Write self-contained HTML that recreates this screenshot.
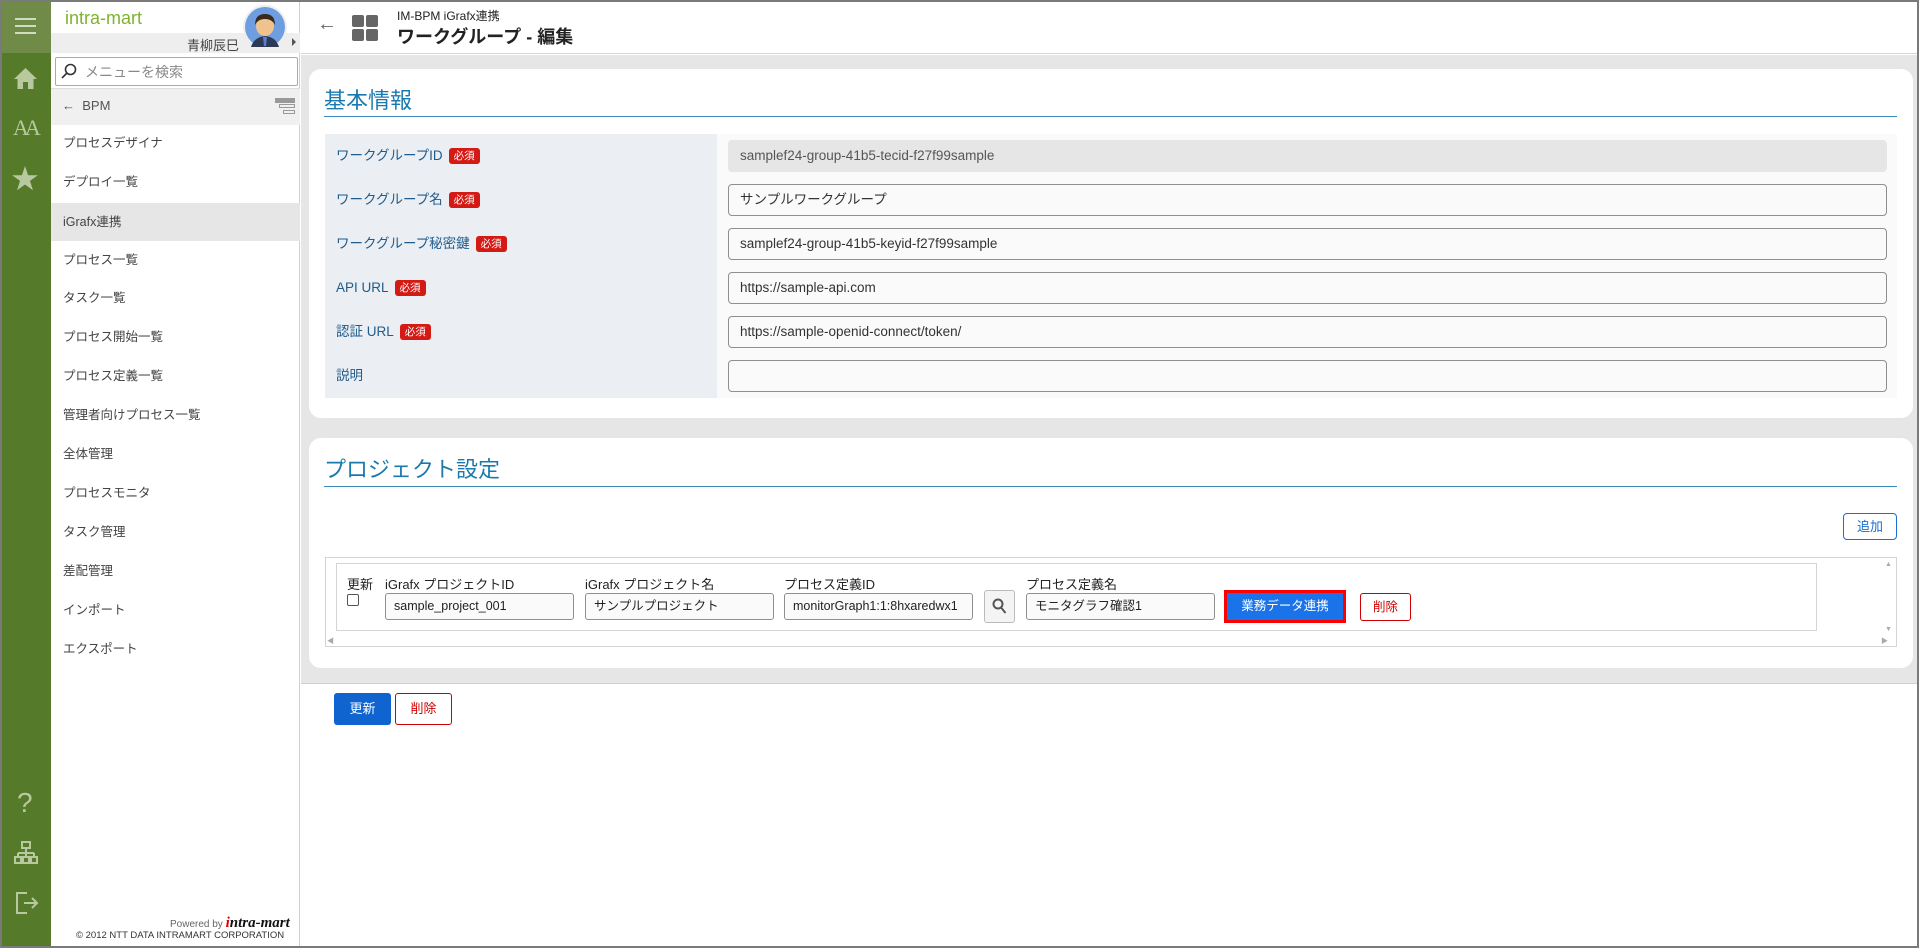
<!DOCTYPE html>
<html><head><meta charset="utf-8">
<style>
*{box-sizing:border-box;margin:0;padding:0}
body{width:1919px;height:948px;position:relative;overflow:hidden;background:#fff;font-family:"Liberation Sans","Noto Sans CJK JP",sans-serif;font-size:13px;color:#333}
.a{position:absolute}
.frame{position:absolute;left:0;top:0;width:1919px;height:948px;border:2px solid #7a7a7a;border-left-width:2px;pointer-events:none;z-index:50}
.lbar{left:0;top:0;width:51px;height:948px;background:#557a2a}
.ico{color:#b8c9a0;fill:#b8c9a0}
.menu{left:51px;top:0;width:249px;height:948px;background:#fff;border-right:1px solid #d0d0d0}
.mi{position:absolute;left:51px;width:249px;height:39px;line-height:39px;padding-left:12px;font-size:12.5px;color:#444}
.lbl{position:absolute;left:336px;font-size:13.5px;color:#1f5c8c;line-height:20px}
.req{display:inline-block;background:#d41a14;color:#fff;font-size:10.5px;line-height:16px;padding:0 5px;border-radius:3px;margin-left:6px;vertical-align:1px}
.inp{position:absolute;left:728px;width:1159px;height:32px;border:1px solid #8f8f8f;border-radius:4px;background:#fafafa;padding-left:11px;line-height:30px;font-size:13.5px;color:#333}
.sm{position:absolute;height:27px;border:1px solid #8f8f8f;border-radius:3px;background:#fafafa;padding-left:8px;line-height:25px;font-size:12.5px;color:#222;overflow:hidden;white-space:nowrap}
.sl{position:absolute;top:574px;font-size:13px;color:#222}
</style></head><body>
<div class="frame"></div>
<!-- left bar -->
<div class="a lbar"></div>
<div class="a" style="left:0;top:0;width:51px;height:53px;background:#6f8b47"></div>
<div class="a" style="left:15px;top:18px;width:21px;height:2px;background:#cfdcbf;box-shadow:0 7px 0 #cfdcbf,0 14px 0 #cfdcbf"></div>
<svg class="a ico" style="left:13px;top:67px" width="25" height="23" viewBox="0 0 25 23"><path d="M12.5 1 L24 12 H20.5 V22 H15 V15 H10 V22 H4.5 V12 H1 Z"/></svg>
<div class="a ico" style="left:13px;top:115px;font-family:'Liberation Serif',serif;font-size:22px;letter-spacing:-4px">AA</div>
<svg class="a ico" style="left:12px;top:166px" width="26" height="25" viewBox="0 0 26 25"><path d="M13 0 L16.1 9.2 H25.8 L18 14.9 L20.9 24.2 L13 18.5 L5.1 24.2 L8 14.9 L0.2 9.2 H9.9 Z"/></svg>
<div class="a ico" style="left:17px;top:787px;font-size:28px;color:#b8c9a0">?</div>
<svg class="a" style="left:14px;top:841px" width="24" height="24" viewBox="0 0 24 24" fill="none" stroke="#b8c9a0" stroke-width="2"><rect x="8" y="1" width="8" height="6"/><path d="M12 7v5M4 12h16M4 12v4M12 12v4M20 12v4"/><rect x="1" y="16" width="6" height="6"/><rect x="9" y="16" width="6" height="6"/><rect x="17" y="16" width="6" height="6"/></svg>
<svg class="a" style="left:15px;top:891px" width="24" height="24" viewBox="0 0 24 24" fill="none" stroke="#b8c9a0" stroke-width="2"><path d="M12 2H2v20h10M9 12h13M17 7l5 5-5 5"/></svg>
<!-- menu -->
<div class="a menu"></div>
<div class="a" style="left:65px;top:8px;font-size:18px;color:#7db52c">intra-mart</div>
<div class="a" style="left:51px;top:33px;width:249px;height:20px;background:#eeeeee"></div>
<div class="a" style="left:187px;top:35px;font-size:13px;color:#444">青柳辰巳</div>
<div class="a" style="left:292px;top:38px;width:0;height:0;border-left:4px solid #555;border-top:4px solid transparent;border-bottom:4px solid transparent"></div>
<svg class="a" style="left:242px;top:4px" width="46" height="46" viewBox="0 0 46 46"><circle cx="23" cy="23" r="22" fill="#eee"/><circle cx="23" cy="23" r="20" fill="#6e9ee0"/><path d="M9 43 Q12 33 23 32 Q34 33 37 43 Z" fill="#2c3a55"/><path d="M21 33h4l-1 9h-2z" fill="#5a7fd0"/><ellipse cx="23" cy="22" rx="9" ry="10" fill="#f0c38e"/><path d="M13 21 Q13 10 23 10 Q33 10 33 21 Q30 15 23 15 Q16 15 13 21 Z" fill="#3a2a1e"/></svg>
<div class="a" style="left:55px;top:57px;width:243px;height:29px;border:1px solid #aaa;border-radius:2px"></div>
<svg class="a" style="left:61px;top:63px" width="16" height="16" viewBox="0 0 16 16" fill="none" stroke="#333" stroke-width="1.6"><circle cx="9.5" cy="6.5" r="5"/><path d="M6 10L1 15"/></svg>
<div class="a" style="left:85px;top:62px;font-size:14px;color:#888">メニューを検索</div>
<div class="a" style="left:51px;top:88px;width:249px;height:37px;background:#f0f0f0;border-top:1px solid #ddd"></div>
<div class="a" style="left:62px;top:98px;font-size:13px;color:#555">←&nbsp;&nbsp;BPM</div>
<div class="a" style="left:275px;top:98px;width:20px;height:5px;background:#999"></div>
<div class="a" style="left:279px;top:104px;width:16px;height:4px;border:1px solid #999"></div>
<div class="a" style="left:283px;top:110px;width:12px;height:4px;border:1px solid #999"></div>
<div class="mi" style="top:124px">プロセスデザイナ</div>
<div class="mi" style="top:163px">デプロイ一覧</div>
<div class="mi" style="top:203px;height:38px;line-height:38px;background:#e6e6e6">iGrafx連携</div>
<div class="mi" style="top:241px">プロセス一覧</div>
<div class="mi" style="top:279px">タスク一覧</div>
<div class="mi" style="top:318px">プロセス開始一覧</div>
<div class="mi" style="top:357px">プロセス定義一覧</div>
<div class="mi" style="top:396px">管理者向けプロセス一覧</div>
<div class="mi" style="top:435px">全体管理</div>
<div class="mi" style="top:474px">プロセスモニタ</div>
<div class="mi" style="top:513px">タスク管理</div>
<div class="mi" style="top:552px">差配管理</div>
<div class="mi" style="top:591px">インポート</div>
<div class="mi" style="top:630px">エクスポート</div>
<div class="a" style="left:170px;top:915px;font-size:10px;color:#666">Powered by <span style="font-family:'Liberation Serif',serif;font-weight:bold;font-size:15px;color:#111;font-style:italic"><span style="color:#d00">i</span>ntra-mart</span></div>
<div class="a" style="left:76px;top:930px;font-size:9.5px;color:#333">© 2012 NTT DATA INTRAMART CORPORATION</div>
<!-- header -->
<div class="a" style="left:301px;top:0;width:1618px;height:54px;background:#fff;border-bottom:1px solid #d6d6d6"></div>
<div class="a" style="left:317px;top:13px;font-size:20px;color:#666">←</div>
<div class="a" style="left:352px;top:15px;width:12px;height:12px;background:#666;border-radius:2px"></div>
<div class="a" style="left:366px;top:15px;width:12px;height:12px;background:#666;border-radius:2px"></div>
<div class="a" style="left:352px;top:29px;width:12px;height:12px;background:#666;border-radius:2px"></div>
<div class="a" style="left:366px;top:29px;width:12px;height:12px;background:#666;border-radius:2px"></div>
<div class="a" style="left:397px;top:7px;font-size:12px;color:#222">IM-BPM iGrafx連携</div>
<div class="a" style="left:397px;top:23px;font-size:18px;font-weight:bold;color:#222">ワークグループ - 編集</div>
<!-- main bg -->
<div class="a" style="left:301px;top:55px;width:1618px;height:629px;background:#e6e6e6;border-bottom:1px solid #d0d0d0"></div>
<!-- card1 -->
<div class="a" style="left:309px;top:69px;width:1604px;height:349px;background:#fff;border-radius:12px"></div>
<div class="a" style="left:324px;top:83px;font-size:22px;color:#1a7ab0">基本情報</div>
<div class="a" style="left:324px;top:116px;width:1573px;height:1px;background:#3b8cbc"></div>
<div class="a" style="left:325px;top:134px;width:1572px;height:264px;background:#fafafa"></div>
<div class="a" style="left:325px;top:134px;width:392px;height:264px;background:#ebeef2"></div>
<div class="lbl" style="top:146px">ワークグループID<span class="req">必須</span></div>
<div class="lbl" style="top:190px">ワークグループ名<span class="req">必須</span></div>
<div class="lbl" style="top:234px">ワークグループ秘密鍵<span class="req">必須</span></div>
<div class="lbl" style="top:278px">API URL<span class="req">必須</span></div>
<div class="lbl" style="top:322px">認証 URL<span class="req">必須</span></div>
<div class="lbl" style="top:366px">説明</div>
<div class="inp" style="top:140px;border-color:#e6e6e6;background:#e6e6e6;color:#555">samplef24-group-41b5-tecid-f27f99sample</div>
<div class="inp" style="top:184px">サンプルワークグループ</div>
<div class="inp" style="top:228px">samplef24-group-41b5-keyid-f27f99sample</div>
<div class="inp" style="top:272px">https://sample-api.com</div>
<div class="inp" style="top:316px">https://sample-openid-connect/token/</div>
<div class="inp" style="top:360px"></div>
<!-- card2 -->
<div class="a" style="left:309px;top:438px;width:1604px;height:230px;background:#fff;border-radius:12px"></div>
<div class="a" style="left:324px;top:452px;font-size:22px;color:#1a7ab0">プロジェクト設定</div>
<div class="a" style="left:324px;top:486px;width:1573px;height:1px;background:#3b8cbc"></div>
<div class="a" style="left:1843px;top:513px;width:54px;height:27px;border:1px solid #1a6fd0;border-radius:4px;color:#1a6fd0;font-size:13px;text-align:center;line-height:25px">追加</div>
<div class="a" style="left:325px;top:557px;width:1572px;height:90px;border:1px solid #d4d4d4"></div>
<div class="a" style="left:336px;top:563px;width:1481px;height:68px;border:1px solid #d4d4d4"></div>
<div class="a" style="left:1885px;top:561px;font-size:7px;color:#aaa">▲</div>
<div class="a" style="left:1885px;top:626px;font-size:7px;color:#aaa">▼</div>
<div class="a" style="left:327px;top:636px;font-size:7px;color:#aaa">◀</div>
<div class="a" style="left:1881px;top:636px;font-size:7px;color:#aaa">▶</div>
<div class="sl" style="left:347px">更新</div>
<div class="a" style="left:347px;top:594px;width:12px;height:12px;border:1px solid #555;border-radius:2px;background:#fff"></div>
<div class="sl" style="left:385px">iGrafx プロジェクトID</div>
<div class="sl" style="left:585px">iGrafx プロジェクト名</div>
<div class="sl" style="left:784px">プロセス定義ID</div>
<div class="sl" style="left:1026px">プロセス定義名</div>
<div class="sm" style="left:385px;top:593px;width:189px">sample_project_001</div>
<div class="sm" style="left:585px;top:593px;width:189px">サンプルプロジェクト</div>
<div class="sm" style="left:784px;top:593px;width:189px">monitorGraph1:1:8hxaredwx1</div>
<div class="a" style="left:984px;top:590px;width:31px;height:33px;border:1px solid #bbb;border-radius:3px;background:#f4f4f4"></div>
<svg class="a" style="left:992px;top:598px" width="15" height="16" viewBox="0 0 15 16" fill="none" stroke="#555" stroke-width="2"><circle cx="6" cy="6" r="4.5"/><path d="M9.5 10l4 5"/></svg>
<div class="sm" style="left:1026px;top:593px;width:189px">モニタグラフ確認1</div>
<div class="a" style="left:1224px;top:590px;width:122px;height:33px;border:3px solid #f00;background:#1a73e8;color:#fff;font-size:12.5px;text-align:center;line-height:27px">業務データ連携</div>
<div class="a" style="left:1360px;top:593px;width:51px;height:28px;border:1px solid #c00;border-radius:3px;color:#c00;font-size:12.5px;text-align:center;line-height:26px;background:#fff">削除</div>
<!-- footer buttons -->
<div class="a" style="left:334px;top:693px;width:57px;height:32px;background:#1064d0;border-radius:3px;color:#fff;font-size:13px;text-align:center;line-height:32px">更新</div>
<div class="a" style="left:395px;top:693px;width:57px;height:32px;border:1px solid #c00;border-radius:3px;color:#c00;font-size:13px;text-align:center;line-height:30px">削除</div>
</body></html>
